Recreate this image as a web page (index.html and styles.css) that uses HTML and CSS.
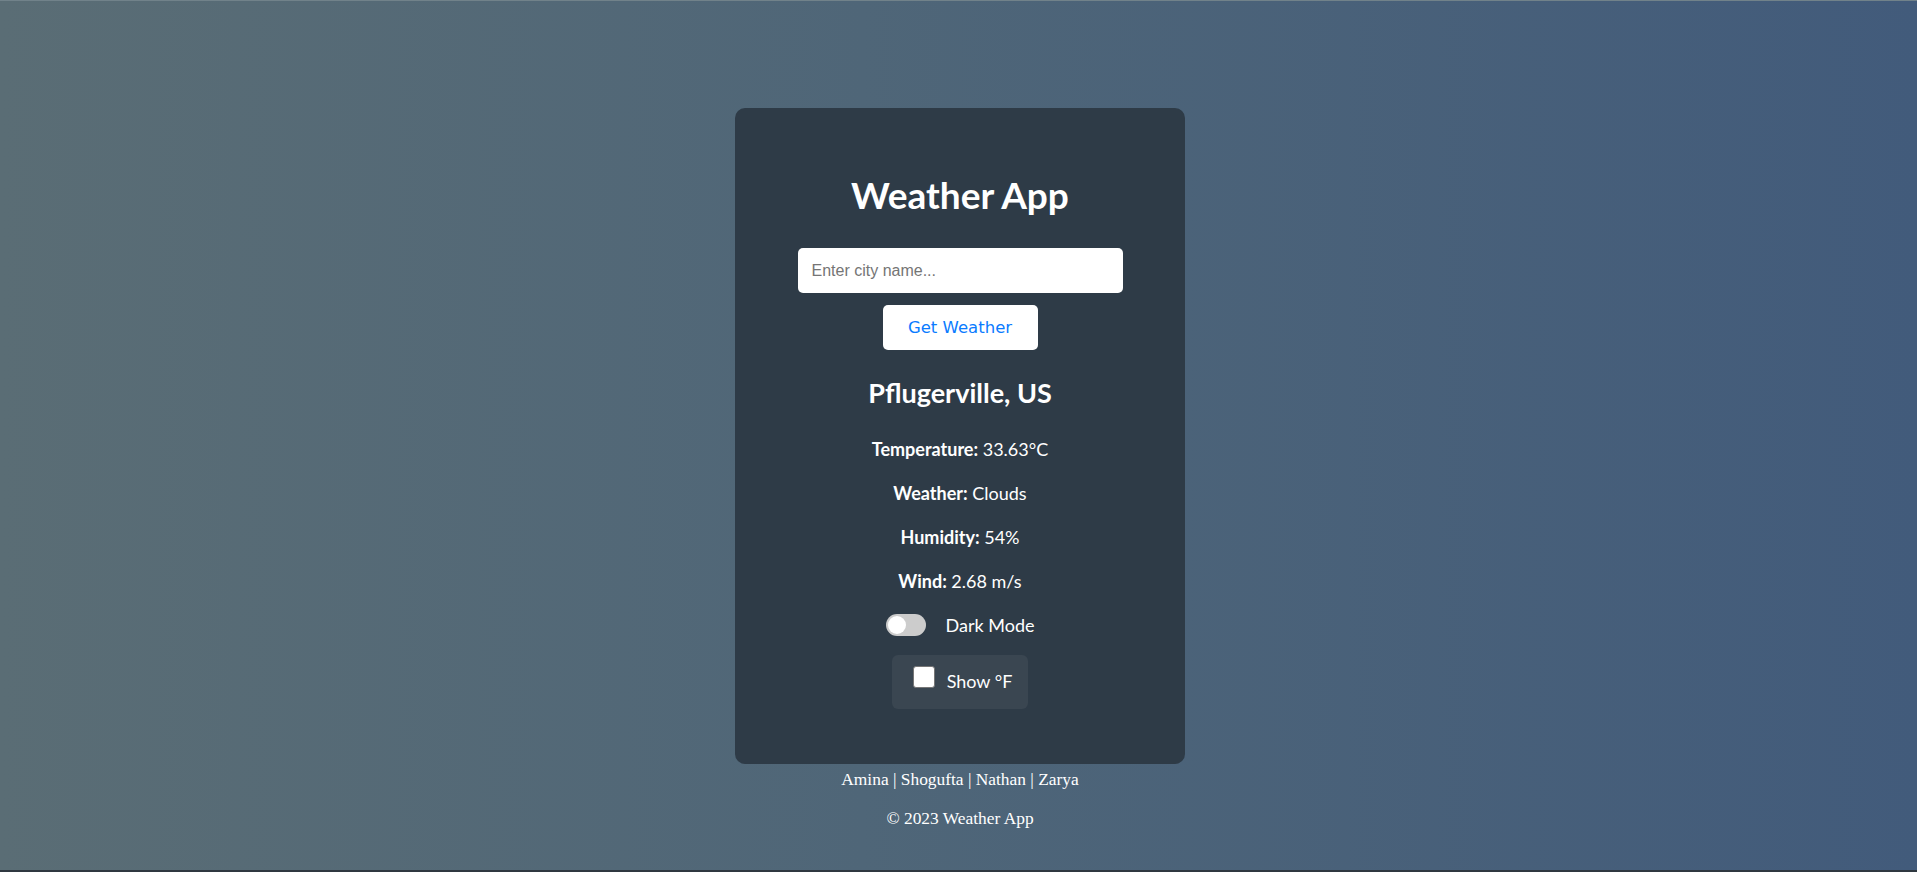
FILE: index.html
```html
<!DOCTYPE html>
<html lang="en">
<head>
<meta charset="utf-8">
<title>Weather App</title>
<link rel="stylesheet" href="styles.css">
</head>
<body>
<div class="page">
  <main class="card">
    <h1 class="title">Weather App</h1>
    <div class="search">
      <input class="city-input" type="text" placeholder="Enter city name...">
      <button class="get-btn" type="button">Get Weather</button>
    </div>
    <h2 class="city">Pflugerville, US</h2>
    <div class="details">
      <p class="detail"><strong>Temperature:</strong> 33.63°C</p>
      <p class="detail"><strong>Weather:</strong> Clouds</p>
      <p class="detail"><strong>Humidity:</strong> 54%</p>
      <p class="detail"><strong>Wind:</strong> 2.68 m/s</p>
    </div>
    <div class="toggle-row">
      <span class="switch"><span class="knob"></span></span>
      <span class="toggle-label">Dark Mode</span>
    </div>
    <div class="unit-box">
      <span class="checkbox"></span>
      <span class="unit-label">Show °F</span>
    </div>
  </main>
  <footer class="footer">
    <p class="names">Amina | Shogufta | Nathan | Zarya</p>
    <p class="copy">© 2023 Weather App</p>
  </footer>
</div>
</body>
</html>
```

FILE: styles.css
```css
* { box-sizing: border-box; }
html, body { margin: 0; padding: 0; height: 100%; }
body {
  background: linear-gradient(to right, #5a6d75, #4f6678 45%, #425b7b);
  font-family: "Lato", "Open Sans", sans-serif;
  color: #ffffff;
  overflow: hidden;
}
.page {
  height: 872px;
  border-top: 1px solid #71828a;
  border-bottom: 2px solid #2f3840;
  display: flex;
  flex-direction: column;
  align-items: center;
  padding-top: 107px;
  padding-left: 3px;
}
.card {
  width: 450px;
  height: 656px;
  background: #2e3b47;
  border-radius: 10px;
  display: flex;
  flex-direction: column;
  align-items: center;
  padding-top: 65px;
}
.title {
  margin: 0;
  font-size: 37px;
  line-height: 44px;
  font-weight: 700;
}
.search {
  display: flex;
  flex-direction: column;
  align-items: center;
  gap: 12px;
  margin-top: 31px;
}
.city-input {
  width: 325px;
  height: 45px;
  border: none;
  border-radius: 5px;
  padding: 0 14px;
  font-family: "Liberation Sans", Arial, sans-serif;
  font-size: 16px;
  color: #333;
  background: #fff;
  outline: none;
}
.city-input::placeholder { color: #757575; }
.get-btn {
  width: 155px;
  height: 45px;
  border: none;
  border-radius: 5px;
  background: #fff;
  color: #0a7bff;
  font-family: "DejaVu Sans", Verdana, sans-serif;
  font-size: 16.5px;
  cursor: pointer;
}
.city {
  margin: 28px 0 0;
  font-size: 27px;
  line-height: 30px;
  font-weight: 700;
}
.details {
  display: flex;
  flex-direction: column;
  align-items: center;
  gap: 20px;
  margin-top: 29px;
}
.detail {
  margin: 0;
  font-size: 18px;
  line-height: 24px;
}
.detail strong { font-weight: 700; }
.toggle-row {
  display: flex;
  align-items: center;
  gap: 20px;
  margin-top: 21px;
  height: 22px;
}
.switch {
  position: relative;
  width: 40px;
  height: 22px;
  border-radius: 11px;
  background: #cccccc;
}
.knob {
  position: absolute;
  left: 2px;
  top: 2px;
  width: 18px;
  height: 18px;
  border-radius: 50%;
  background: #ffffff;
}
.toggle-label {
  font-size: 18px;
  line-height: 22px;
}
.unit-box {
  margin-top: 19px;
  display: flex;
  align-items: baseline;
  gap: 12px;
  padding: 11px 16px 17px 21px;
  background: #3a4651;
  border-radius: 6px;
  height: 54px;
  white-space: nowrap;
}
.checkbox {
  width: 22px;
  height: 22px;
  background: #fff;
  border: 1px solid #767676;
  border-radius: 3px;
}
.unit-label {
  font-size: 18px;
  line-height: 22px;
}
.footer {
  display: flex;
  flex-direction: column;
  align-items: center;
  font-family: "Liberation Serif", "Times New Roman", serif;
  font-size: 17.4px;
  line-height: 20px;
}
.names { margin: 5px 0 0; }
.copy { margin: 19px 0 0; }
```
